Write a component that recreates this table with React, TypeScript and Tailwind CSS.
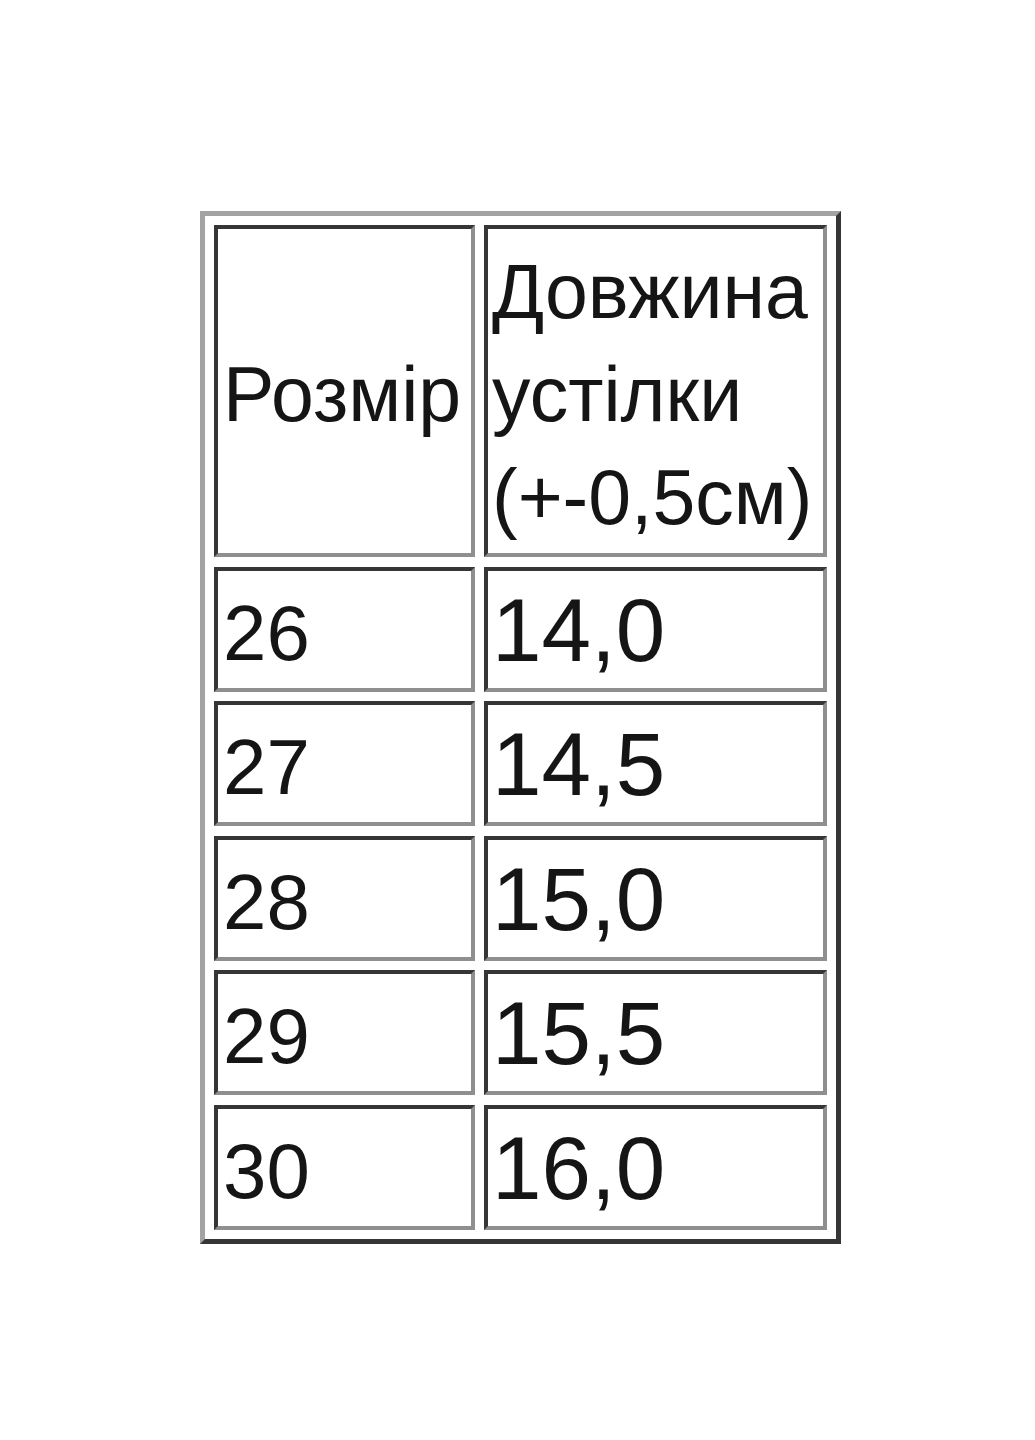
import React from "react";

const rows: [string, string][] = [
  ["26", "14,0"],
  ["27", "14,5"],
  ["28", "15,0"],
  ["29", "15,5"],
  ["30", "16,0"],
];

const cell =
  "border-[4px] border-t-[#363636] border-l-[#363636] border-b-[#8f8f8f] border-r-[#8f8f8f] bg-white leading-[103px]";

export default function App() {
  return (
    <div className="min-h-[1440px] w-full bg-white pt-[211px] pl-[200px] font-['Liberation_Sans',Arial,sans-serif] text-[#151515]">
      <div className="w-[641px] border-[5px] border-t-[#a3a3a3] border-l-[#a3a3a3] border-b-[#363636] border-r-[#363636] p-[9px] flex flex-col gap-[9.5px]">
        <div className="flex gap-[9px]">
          <div className={`${cell} pl-[5px] pt-[11px] pb-[4px] w-[261px] flex items-center text-[77px]`}>
            <span>Розмір</span>
          </div>
          <div className={`${cell} pl-[4px] pt-[11px] pb-[4px] w-[343px] flex flex-col text-[77px]`}>
            <span>Довжина</span>
            <span>устілки</span>
            <span className="whitespace-nowrap">(+-0,5см)</span>
          </div>
        </div>
        {rows.map(([size, len]) => (
          <div key={size} className="flex gap-[9px]">
            <div className={`${cell} pl-[5px] pt-[11px] pb-[3px] w-[261px] text-[78px]`}>{size}</div>
            <div className={`${cell} pl-[4px] pt-[8px] pb-[6px] w-[343px] text-[89px]`}>{len}</div>
          </div>
        ))}
      </div>
    </div>
  );
}
